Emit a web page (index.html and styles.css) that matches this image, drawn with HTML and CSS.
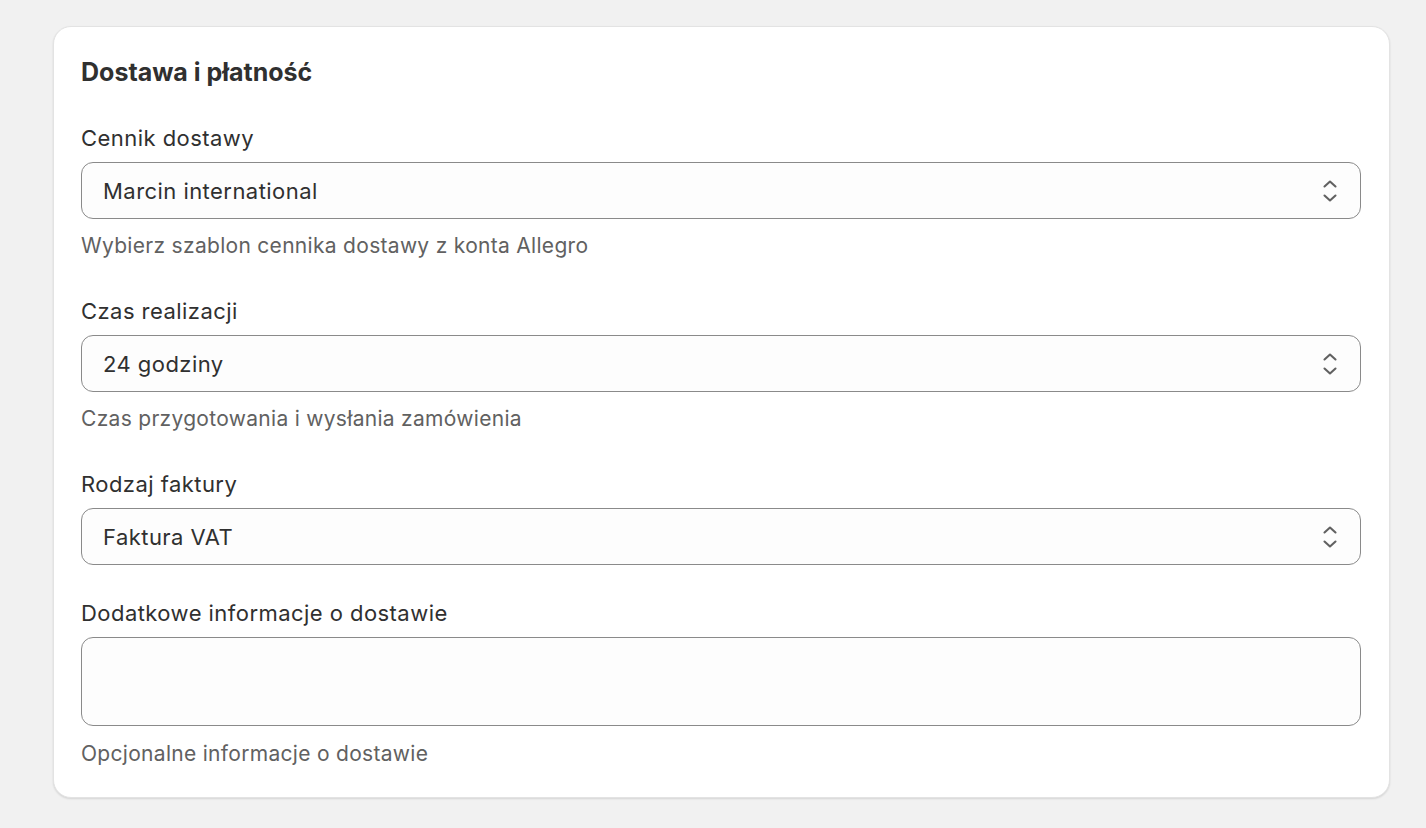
FILE: index.html
```html
<!DOCTYPE html>
<html lang="pl">
<head>
<meta charset="utf-8">
<title>Dostawa i płatność</title>
<link rel="stylesheet" href="styles.css">
</head>
<body>
<main class="page">
  <section class="card">
    <h2 class="card-title">Dostawa i płatność</h2>
    <div class="fields">
      <div class="field">
        <label class="label">Cennik dostawy</label>
        <div class="select">
          <span class="select-value">Marcin international</span>
          <svg class="chevrons" width="14" height="22" viewBox="0 0 14 22" aria-hidden="true">
            <path d="M1.5 6.5 L7 1.5 L12.5 6.5" fill="none" stroke="#616161" stroke-width="2.1" stroke-linecap="round" stroke-linejoin="round"/>
            <path d="M1.5 15.5 L7 20.5 L12.5 15.5" fill="none" stroke="#616161" stroke-width="2.1" stroke-linecap="round" stroke-linejoin="round"/>
          </svg>
        </div>
        <p class="help">Wybierz szablon cennika dostawy z konta Allegro</p>
      </div>
      <div class="field">
        <label class="label">Czas realizacji</label>
        <div class="select">
          <span class="select-value">24 godziny</span>
          <svg class="chevrons" width="14" height="22" viewBox="0 0 14 22" aria-hidden="true">
            <path d="M1.5 6.5 L7 1.5 L12.5 6.5" fill="none" stroke="#616161" stroke-width="2.1" stroke-linecap="round" stroke-linejoin="round"/>
            <path d="M1.5 15.5 L7 20.5 L12.5 15.5" fill="none" stroke="#616161" stroke-width="2.1" stroke-linecap="round" stroke-linejoin="round"/>
          </svg>
        </div>
        <p class="help">Czas przygotowania i wysłania zamówienia</p>
      </div>
      <div class="field">
        <label class="label">Rodzaj faktury</label>
        <div class="select">
          <span class="select-value">Faktura VAT</span>
          <svg class="chevrons" width="14" height="22" viewBox="0 0 14 22" aria-hidden="true">
            <path d="M1.5 6.5 L7 1.5 L12.5 6.5" fill="none" stroke="#616161" stroke-width="2.1" stroke-linecap="round" stroke-linejoin="round"/>
            <path d="M1.5 15.5 L7 20.5 L12.5 15.5" fill="none" stroke="#616161" stroke-width="2.1" stroke-linecap="round" stroke-linejoin="round"/>
          </svg>
        </div>
      </div>
      <div class="field">
        <label class="label">Dodatkowe informacje o dostawie</label>
        <div class="textarea"></div>
        <p class="help help-last">Opcjonalne informacje o dostawie</p>
      </div>
    </div>
  </section>
</main>
</body>
</html>
```
FILE: styles.css
```css
* { box-sizing: border-box; }
html, body { margin: 0; padding: 0; }
body {
  background: #f1f1f1;
  font-family: Inter, "Noto Sans", "Liberation Sans", sans-serif;
  color: #303030;
  width: 1426px;
  height: 828px;
  overflow: hidden;
}
.page {
  padding: 26px 36px 0 53px;
}
.card {
  background: #ffffff;
  border-radius: 18px;
  border: 1px solid #e3e3e3;
  box-shadow: 0 1px 2px rgba(0, 0, 0, 0.12);
  padding: 27px 28px 28px 27px;
  height: 772px;
}
.card-title {
  margin: 0;
  font-size: 25px;
  line-height: 36px;
  font-weight: 650;
  color: #303030;
}
.fields {
  display: flex;
  flex-direction: column;
  gap: 34px;
  margin-top: 34px;
}
.field {
  display: flex;
  flex-direction: column;
}
.label {
  font-size: 22px;
  line-height: 28px;
  letter-spacing: 0.45px;
  color: #303030;
  margin-bottom: 10px;
}
.select {
  height: 57px;
  border: 1px solid #8a8a8a;
  border-radius: 12px;
  background: #fdfdfd;
  display: flex;
  align-items: center;
  justify-content: space-between;
  padding: 0 23px 0 21px;
}
.select-value {
  font-size: 22px;
  line-height: 28px;
  letter-spacing: 0.45px;
  color: #303030;
}
.chevrons { display: block; }
.textarea {
  height: 89px;
  border: 1px solid #8a8a8a;
  border-radius: 12px;
  background: #fdfdfd;
}
.help {
  margin: 13px 0 3px;
  font-size: 21px;
  line-height: 28px;
  letter-spacing: 0.3px;
  color: #616161;
}
.help-last {
  margin-top: 14px;
}
```
